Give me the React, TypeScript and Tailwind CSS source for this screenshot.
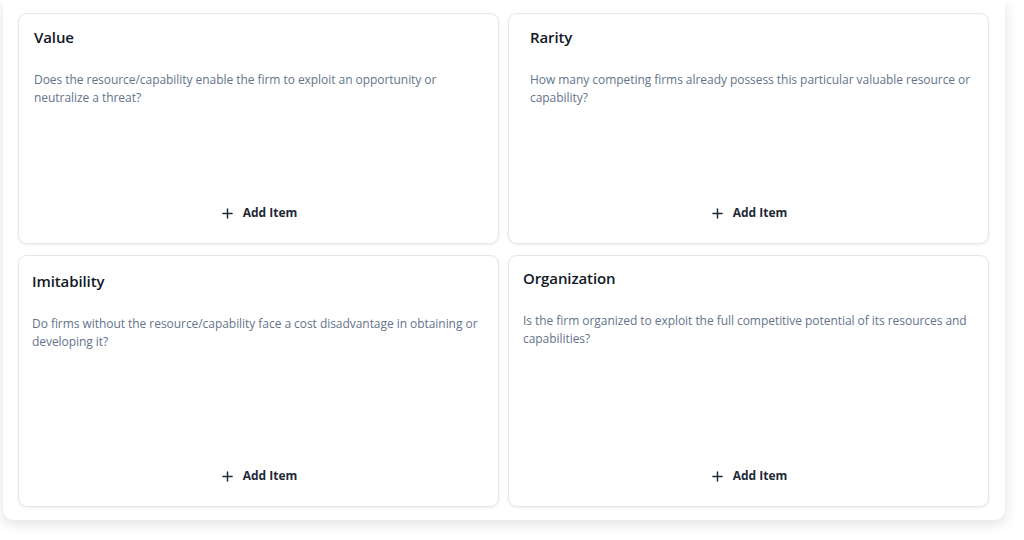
import React from "react";

interface Block {
  title: string;
  description: string;
  pad: string;
  descClass?: string;
}

const blocks: Block[] = [
  {
    title: "Value",
    description:
      "Does the resource/capability enable the firm to exploit an opportunity or neutralize a threat?",
    pad: "px-[15px] pt-[13px]",
  },
  {
    title: "Rarity",
    description:
      "How many competing firms already possess this particular valuable resource or capability?",
    pad: "px-[21px] pt-[13px]",
    descClass: "-mr-[11px]",
  },
  {
    title: "Imitability",
    description:
      "Do firms without the resource/capability face a cost disadvantage in obtaining or developing it?",
    pad: "px-[13px] pt-[15px]",
  },
  {
    title: "Organization",
    description:
      "Is the firm organized to exploit the full competitive potential of its resources and capabilities?",
    pad: "px-[14px] pt-[12px]",
  },
];

const PlusIcon = () => (
  <svg
    width="11"
    height="11"
    viewBox="0 0 12 12"
    fill="none"
    stroke="currentColor"
    strokeWidth="1.6"
    strokeLinecap="round"
  >
    <path d="M6 1v10M1 6h10" />
  </svg>
);

const BlockCard: React.FC<{ block: Block }> = ({ block }) => (
  <div
    className={`flex flex-col bg-white border border-[#e5e7eb] rounded-[9px] shadow-[0_1px_3px_rgba(0,0,0,0.08)] ${block.pad}`}
  >
    <h3 className="text-[15px] leading-[20px] font-semibold text-[#111827] tracking-[-0.1px]">
      {block.title}
    </h3>
    <p
      className={`mt-[24px] text-[12px] leading-[18px] text-[#64748b] tracking-[-0.05px] ${block.descClass ?? ""}`}
    >
      {block.description}
    </p>
    <div className="flex-1" />
    <button className="self-center flex items-center gap-[10px] h-[20px] mb-[20px] text-[12px] font-bold text-[#1f2937] translate-x-[1px]">
      <PlusIcon />
      <span>Add Item</span>
    </button>
  </div>
);

export default function App() {
  return (
    <div
      className="w-[1024px] h-[540px] bg-white pl-[3px] pr-[19px] pb-[20px]"
      style={{ fontFamily: '"Open Sans", "Noto Sans", sans-serif' }}
    >
      <div className="h-full bg-white rounded-b-[11px] shadow-[0_4px_14px_rgba(0,0,0,0.12)] px-[15px] pt-[13px] pb-[13px] grid grid-cols-[481px_481px] grid-rows-[231px_252px] gap-x-[9px] gap-y-[11px]">
        {blocks.map((b) => (
          <BlockCard key={b.title} block={b} />
        ))}
      </div>
    </div>
  );
}
